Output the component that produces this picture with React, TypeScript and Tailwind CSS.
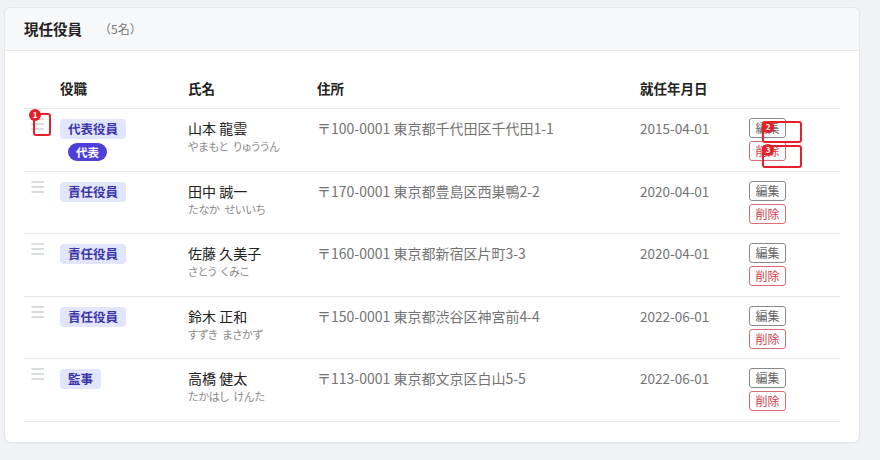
import React from "react";

type Officer = {
  role: string;
  rep?: boolean;
  name: string;
  kana: string;
  address: string;
  date: string;
};

const officers: Officer[] = [
  { role: "代表役員", rep: true, name: "山本 龍雲", kana: "やまもと りゅううん", address: "〒100-0001 東京都千代田区千代田1-1", date: "2015-04-01" },
  { role: "責任役員", name: "田中 誠一", kana: "たなか せいいち", address: "〒170-0001 東京都豊島区西巣鴨2-2", date: "2020-04-01" },
  { role: "責任役員", name: "佐藤 久美子", kana: "さとう くみこ", address: "〒160-0001 東京都新宿区片町3-3", date: "2020-04-01" },
  { role: "責任役員", name: "鈴木 正和", kana: "すずき まさかず", address: "〒150-0001 東京都渋谷区神宮前4-4", date: "2022-06-01" },
  { role: "監事", name: "高橋 健太", kana: "たかはし けんた", address: "〒113-0001 東京都文京区白山5-5", date: "2022-06-01" },
];

const cols = "grid grid-cols-[36px_128px_129px_323px_109px_1fr]";

const DragHandle = () => (
  <svg width="14" height="12" viewBox="0 0 14 12" className="ml-[7px]">
    <g stroke="#cdd1d6" strokeWidth="1.4">
      <line x1="0.5" y1="1" x2="13" y2="1" />
      <line x1="0.5" y1="6" x2="13" y2="6" />
      <line x1="0.5" y1="11" x2="13" y2="11" />
    </g>
  </svg>
);

// red annotation box with a numbered dot
const Marker = ({ n, className, dot }: { n: number; className: string; dot: string }) => (
  <div className={`absolute rounded-[3px] border-2 border-[#e4202a] ${className}`}>
    <div
      className={`absolute flex h-[12px] w-[12px] items-center justify-center rounded-full bg-[#e4202a] text-[8px] font-bold leading-none text-white ${dot}`}
    >
      {n}
    </div>
  </div>
);

export default function App() {
  return (
    <div className="relative h-[460px] w-[880px] bg-[#f1f2f5] pl-[4px] pt-[7px] font-['Noto_Sans_CJK_JP',sans-serif]">
      <div className="w-[856px] overflow-hidden rounded-[7px] border border-[#e4e6ea] bg-white shadow-[0_1px_2px_rgba(0,0,0,0.04)]">
        <div className="flex h-[43px] items-center border-b border-[#e6e8eb] bg-[#f7f8fa] px-[19px]">
          <span className="text-[14.5px] font-bold text-[#222]">現任役員</span>
          <span className="ml-[17px] text-[12px] text-[#777]">（5名）</span>
        </div>

        <div className="px-[19px] pb-[20px] pt-[18px]">
          <div className={`${cols} h-[40px] items-center border-b border-[#e3e5e8] text-[13.5px] font-bold text-[#222]`}>
            <div />
            <div>役職</div>
            <div>氏名</div>
            <div>住所</div>
            <div>就任年月日</div>
            <div />
          </div>

          {officers.map((o, i) => (
            <div
              key={i}
              className={`${cols} h-[62.6px] items-start border-b border-[#e3e5e8] pt-[9px]`}
            >
              <DragHandle />
              <div className="flex flex-col items-start gap-[4px] pt-[1px]">
                <span className="rounded-[4px] bg-[#e2e6fd] px-[8px] py-[2px] text-[12.5px] font-semibold leading-[16px] text-[#3b35a8]">
                  {o.role}
                </span>
                {o.rep && (
                  <span className="ml-[8px] rounded-full bg-[#4f3fd9] px-[8px] text-[11.5px] font-bold leading-[18px] text-white">
                    代表
                  </span>
                )}
              </div>
              <div className="flex flex-col">
                <span className="text-[14px] leading-[20px] text-[#222]">{o.name}</span>
                <span className="text-[11px] leading-[16px] text-[#8a8a8a] [font-feature-settings:'palt'] [word-spacing:2px]">
                  {o.kana}
                </span>
              </div>
              <div className="text-[14px] leading-[20px] text-[#737373]">{o.address}</div>
              <div className="text-[13.5px] leading-[20px] text-[#737373]">{o.date}</div>
              <div className="flex flex-col items-start gap-[3px]">
                <button className="flex h-[20px] w-[37px] items-center justify-center rounded-[3px] border border-[#8a8a8a] bg-white text-[12px] text-[#666]">
                  編集
                </button>
                <button className="flex h-[20px] w-[37px] items-center justify-center rounded-[3px] border border-[#dc6b78] bg-white text-[12px] text-[#d33a4a]">
                  削除
                </button>
              </div>
            </div>
          ))}
        </div>
      </div>

      <Marker n={1} className="left-[33px] top-[113px] h-[23px] w-[18px]" dot="-left-[6px] -top-[6px]" />
      <Marker n={2} className="left-[762px] top-[121px] h-[22px] w-[40px]" dot="-left-[2px] -top-[2px]" />
      <Marker n={3} className="left-[762px] top-[145px] h-[23px] w-[40px]" dot="-left-[2px] -top-[3px]" />
    </div>
  );
}
